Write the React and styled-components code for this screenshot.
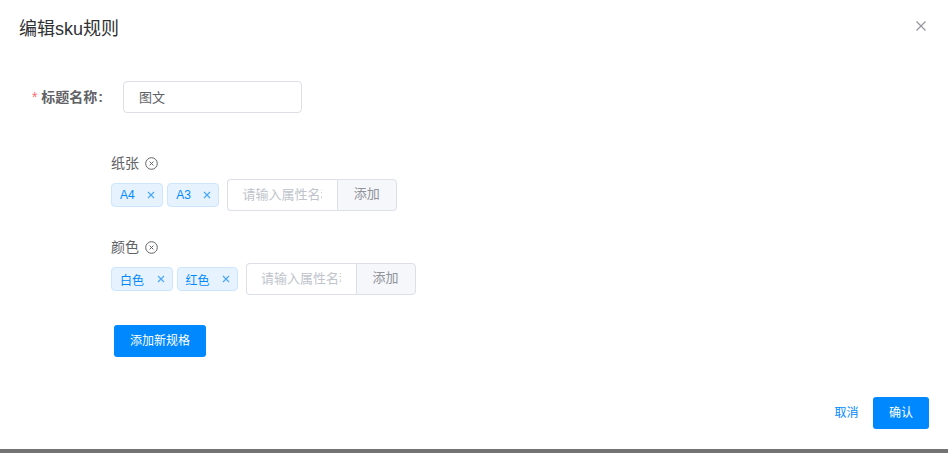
import React from 'react';
import styled, { createGlobalStyle } from 'styled-components';

const Global = createGlobalStyle`
    html, body {
        margin: 0;
        padding: 0;
        background: #fff;
        font-family: "Liberation Sans", "Noto Sans CJK SC", sans-serif;
    }
`

const Page = styled.div`
    width: 948px;
    height: 453px;
    display: flex;
    flex-direction: column;
    overflow: hidden;
`

const Dialog = styled.div`
    flex: 1;
    display: flex;
    flex-direction: column;
    background: #fff;
`

const Strip = styled.div`
    height: 4px;
    background: #737373;
`

const Header = styled.div`
    display: flex;
    justify-content: space-between;
    align-items: flex-start;
    padding: 17px 20px 0 19px;
    height: 64px;
    box-sizing: border-box;
`

const Title = styled.div`
    font-size: 18px;
    line-height: 24px;
    color: #303133;
`

const Close = styled.svg`
    width: 12px;
    height: 12px;
    margin: 3px 1px 0 0;
    stroke: #909399;
    stroke-width: 1.1;
    fill: none;
`

const Body = styled.div`
    flex: 1;
    display: flex;
    flex-direction: column;
`

const FormRow = styled.div`
    display: flex;
    align-items: center;
    height: 32px;
    margin-top: 17px;
`

const Label = styled.label`
    width: 123px;
    box-sizing: border-box;
    padding: 0 20px 2px 0;
    text-align: right;
    font-size: 14px;
    font-weight: 700;
    color: #606266;
`

const Star = styled.span`
    color: #f56c6c;
    margin-right: 4px;
    font-weight: 400;
`

const Colon = styled.span`
    margin-left: 1px;
`

const TextInput = styled.input`
    box-sizing: border-box;
    height: 32px;
    width: ${p => p.$width}px;
    padding: 0 15px 2px ${p => p.$joined ? 14 : 15}px;
    border: 1px solid #dcdfe6;
    border-radius: ${p => p.$joined ? '4px 0 0 4px' : '4px'};
    ${p => p.$joined && 'border-right: 0;'}
    font: 13px "Liberation Sans", "Noto Sans CJK SC", sans-serif;
    color: #606266;
    outline: none;
    &::placeholder {
        color: #c0c4cc;
    }
`

const Specs = styled.div`
    display: flex;
    flex-direction: column;
    padding-left: 111px;
    margin-top: 40px;
`

const Spec = styled.div`
    margin-bottom: 26px;
`

const SpecName = styled.div`
    display: flex;
    align-items: center;
    gap: 6px;
    height: 20px;
    margin-bottom: 6px;
    font-size: 14px;
    color: #606266;
`

const SpecText = styled.span`
    padding-bottom: 2px;
`

const RemoveIcon = styled.svg`
    width: 13px;
    height: 13px;
    stroke: #606266;
    fill: none;
`

const Values = styled.div`
    display: flex;
    align-items: center;
    height: 32px;
`

const Tag = styled.span`
    box-sizing: border-box;
    display: inline-flex;
    align-items: center;
    justify-content: space-between;
    height: 24px;
    padding: 0 7px 0 8px;
    margin-right: 4px;
    min-width: 52px;
    gap: 12.5px;
    background: #e6f3ff;
    border: 1px solid #cce6ff;
    border-radius: 4px;
    font-size: 12px;
    color: #0089ff;
`

const TagClose = styled.svg`
    width: 8px;
    height: 8px;
    stroke: #4ba8f5;
    stroke-width: 1.2;
    fill: none;
`

const InputGroup = styled.div`
    display: flex;
    margin-left: 4px;
`

const Append = styled.div`
    box-sizing: border-box;
    width: 60px;
    height: 32px;
    padding-right: 1px;
    line-height: 28px;
    text-align: center;
    font-size: 13px;
    color: #909399;
    background: #f5f7fa;
    border: 1px solid #dcdfe6;
    border-radius: 0 4px 4px 0;
`

const Button = styled.button`
    box-sizing: border-box;
    height: 32px;
    width: ${p => p.$width}px;
    padding: 0 0 3px 0;
    border: 0;
    border-radius: 3px;
    background: ${p => p.$text ? 'transparent' : '#0089ff'};
    color: ${p => p.$text ? '#0089ff' : '#fff'};
    font: 12px "Liberation Sans", "Noto Sans CJK SC", sans-serif;
`

const AddWrap = styled.div`
    margin: 4px 0 0 3px;
`

const Footer = styled.div`
    display: flex;
    justify-content: flex-end;
    align-items: center;
    gap: 12px;
    padding: 0 19px 20px 0;
`

const CrossIcon = () => (
    <Close viewBox="0 0 12 12"><path d="M1.5 1.5l9 9M10.5 1.5l-9 9" /></Close>
)

const SpecBlock = ({name, tags}) => (
    <Spec>
        <SpecName>
            <SpecText>{name}</SpecText>
            <RemoveIcon viewBox="0 0 13 13">
                <circle cx="6.5" cy="6.5" r="5.8" />
                <path d="M4.6 4.6l3.8 3.8M8.4 4.6L4.6 8.4" />
            </RemoveIcon>
        </SpecName>
        <Values>
            {tags.map(t => (
                <Tag key={t}>
                    {t}
                    <TagClose viewBox="0 0 8 8"><path d="M1 1l6 6M7 1L1 7" /></TagClose>
                </Tag>
            ))}
            <InputGroup>
                <TextInput $width={110} $joined placeholder="请输入属性名称" />
                <Append>添加</Append>
            </InputGroup>
        </Values>
    </Spec>
)

const App = () => {
    return <Page>
        <Global />
        <Dialog>
            <Header>
                <Title>编辑sku规则</Title>
                <CrossIcon />
            </Header>
            <Body>
                <FormRow>
                    <Label><Star>*</Star>标题名称<Colon>:</Colon></Label>
                    <TextInput $width={179} defaultValue="图文" />
                </FormRow>
                <Specs>
                    <SpecBlock name="纸张" tags={['A4', 'A3']} />
                    <SpecBlock name="颜色" tags={['白色', '红色']} />
                    <AddWrap>
                        <Button $width={92}>添加新规格</Button>
                    </AddWrap>
                </Specs>
            </Body>
            <Footer>
                <Button $width={29} $text>取消</Button>
                <Button $width={56}>确认</Button>
            </Footer>
        </Dialog>
        <Strip />
    </Page>
}

export default App;
